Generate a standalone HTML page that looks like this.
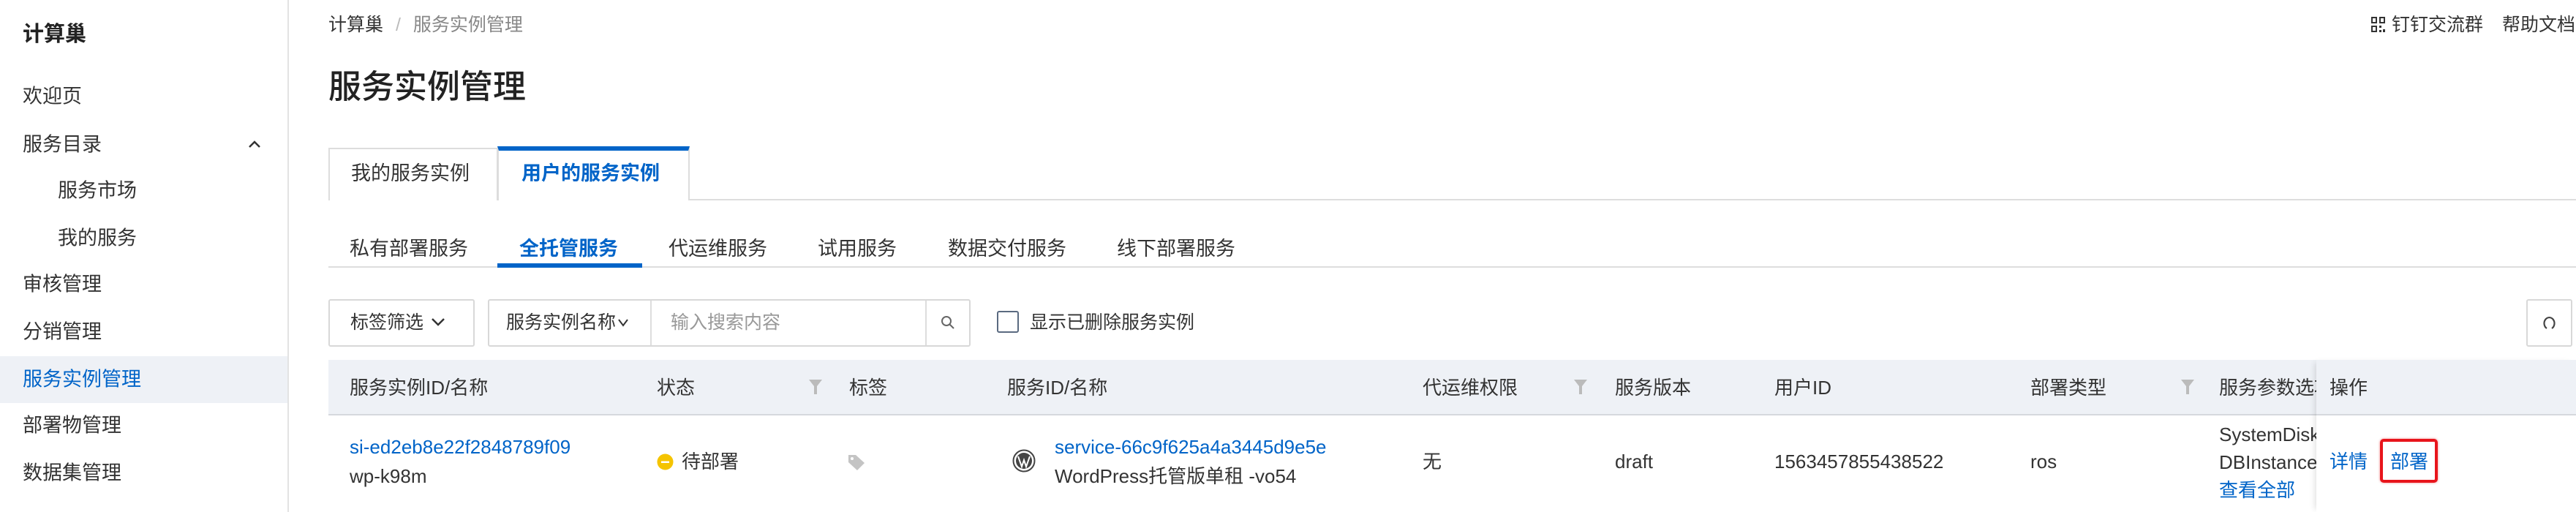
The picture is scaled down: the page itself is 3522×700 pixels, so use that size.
<!DOCTYPE html>
<html><head><meta charset="utf-8"><style>
*{margin:0;padding:0;box-sizing:border-box}
body{width:3522px;height:700px;overflow:hidden;background:#fff;font-family:"Liberation Sans","Noto Sans CJK SC",sans-serif;color:#333;position:relative}
.a{position:absolute;white-space:nowrap;line-height:1}
.side{position:absolute;left:0;top:0;width:395px;height:700px;border-right:2px solid #e3e3e3;background:#fff;overflow:hidden}
.m{font-size:27px;color:#333;left:31px;transform:translateY(-50%)}
.blue{color:#0064c8}
.t{font-size:26px;transform:translateY(-50%)}
.box{position:absolute;border:2px solid #d8d8d8;border-radius:3px;background:#fff}
</style></head><body>
<div class="side">
<div class="a" style="left:31px;top:33px;font-size:29px;font-weight:bold;color:#222">计算巢</div>
<div class="a m" style="top:132px">欢迎页</div>
<div class="a m" style="top:198px">服务目录</div>
<svg class="a" style="left:338px;top:190px" width="20" height="14" viewBox="0 0 20 14"><path d="M3 11 L10 4 L17 11" stroke="#333" stroke-width="2.5" fill="none"/></svg>
<div class="a m" style="top:261px;left:79px">服务市场</div>
<div class="a m" style="top:326px;left:79px">我的服务</div>
<div class="a m" style="top:389px">审核管理</div>
<div class="a m" style="top:454px">分销管理</div>
<div style="position:absolute;left:0;top:487px;width:393px;height:64px;background:#eef1f6"></div>
<div class="a m blue" style="top:519px">服务实例管理</div>
<div class="a m" style="top:582px">部署物管理</div>
<div class="a m" style="top:647px">数据集管理</div>
<div class="a m" style="top:716px">数据管理</div>
</div>

<div class="a" style="left:449px;top:22px;font-size:25px;color:#333">计算巢 <span style="color:#bbb;margin:0 10px">/</span> <span style="color:#888">服务实例管理</span></div>
<svg class="a" style="left:3241px;top:22px" width="22" height="24" viewBox="0 0 22 24"><g fill="#333"><rect x="1" y="1" width="8" height="9"/><rect x="12" y="1" width="8" height="9"/><rect x="1" y="13" width="8" height="9"/><rect x="12" y="13" width="3" height="3"/><rect x="17" y="18" width="3" height="4"/><rect x="12" y="19" width="3" height="3"/></g><g fill="#fff"><rect x="3" y="3" width="4" height="5"/><rect x="14" y="3" width="4" height="5"/><rect x="3" y="15" width="4" height="5"/></g></svg>
<div class="a" style="left:3270px;top:22px;font-size:25px;color:#333">钉钉交流群</div>
<div class="a" style="left:3421px;top:22px;font-size:25px;color:#333">帮助文档</div>

<div class="a" style="left:449px;top:96px;font-size:45px;font-weight:500;color:#222">服务实例管理</div>

<div style="position:absolute;left:449px;top:272px;width:3073px;height:2px;background:#ddd"></div>
<div style="position:absolute;left:449px;top:202px;width:232px;height:72px;border:2px solid #ddd;border-bottom:none;background:#fff"></div>
<div style="position:absolute;left:680px;top:200px;width:263px;height:74px;border:2px solid #ddd;border-top:6px solid #0064c8;border-bottom:none;background:#fff"></div>
<div class="a" style="left:480px;top:224px;font-size:27px;color:#333">我的服务实例</div>
<div class="a blue" style="left:713px;top:224px;font-size:27px;font-weight:bold">用户的服务实例</div>

<div style="position:absolute;left:449px;top:364px;width:3073px;height:2px;background:#ddd"></div>
<div style="position:absolute;left:680px;top:360px;width:198px;height:6px;background:#0064c8"></div>
<div class="a" style="left:478px;top:327px;font-size:27px">私有部署服务</div>
<div class="a blue" style="left:710px;top:327px;font-size:27px;font-weight:bold">全托管服务</div>
<div class="a" style="left:914px;top:327px;font-size:27px">代运维服务</div>
<div class="a" style="left:1118px;top:327px;font-size:27px">试用服务</div>
<div class="a" style="left:1296px;top:327px;font-size:27px">数据交付服务</div>
<div class="a" style="left:1527px;top:327px;font-size:27px">线下部署服务</div>

<div class="box" style="left:449px;top:409px;width:200px;height:65px"></div>
<div class="a" style="left:479px;top:429px;font-size:25px">标签筛选</div>
<svg class="a" style="left:588px;top:432px" width="22" height="16" viewBox="0 0 22 16"><path d="M3 4 L11 12 L19 4" stroke="#333" stroke-width="2.5" fill="none"/></svg>
<div class="box" style="left:667px;top:409px;width:660px;height:65px"></div>
<div style="position:absolute;left:889px;top:411px;width:2px;height:61px;background:#ddd"></div>
<div style="position:absolute;left:1265px;top:411px;width:2px;height:61px;background:#ddd"></div>
<div class="a" style="left:692px;top:429px;font-size:25px">服务实例名称</div>
<svg class="a" style="left:844px;top:434px" width="16" height="14" viewBox="0 0 16 14"><path d="M2 3 L8 11 L14 3" stroke="#333" stroke-width="2" fill="none"/></svg>
<div class="a" style="left:917px;top:429px;font-size:25px;color:#999">输入搜索内容</div>
<svg class="a" style="left:1285px;top:430px" width="22" height="22" viewBox="0 0 22 22"><circle cx="9" cy="9" r="6" stroke="#666" stroke-width="2" fill="none"/><path d="M13.5 13.5 L19 19" stroke="#666" stroke-width="2"/></svg>
<div style="position:absolute;left:1363px;top:425px;width:30px;height:30px;border:2px solid #5a6a80;border-radius:3px"></div>
<div class="a" style="left:1408px;top:429px;font-size:25px">显示已删除服务实例</div>
<div class="box" style="left:3454px;top:409px;width:63px;height:65px"></div>
<svg class="a" style="left:3474px;top:430px" width="22" height="24" viewBox="0 0 22 24"><path d="M8 19 A7 8 0 1 1 15 19" stroke="#444" stroke-width="2.2" fill="none"/></svg>

<div style="position:absolute;left:449px;top:492px;width:3073px;height:76px;background:#eef1f6;border-bottom:2px solid #d5d8dd"></div>
<div class="a t" style="left:478px;top:530px">服务实例ID/名称</div>
<div class="a t" style="left:898px;top:530px">状态</div>
<div class="a t" style="left:1161px;top:530px">标签</div>
<div class="a t" style="left:1377px;top:530px">服务ID/名称</div>
<div class="a t" style="left:1945px;top:530px">代运维权限</div>
<div class="a t" style="left:2208px;top:530px">服务版本</div>
<div class="a t" style="left:2426px;top:530px">用户ID</div>
<div class="a t" style="left:2776px;top:530px">部署类型</div>
<div class="a t" style="left:3034px;top:530px;width:133px;overflow:hidden;line-height:30px">服务参数选项</div>
<svg class="a" style="left:1105px;top:518px" width="20" height="22" viewBox="0 0 20 22"><path d="M1 1 H19 L12 10 V21 H8 V10 Z" fill="#bbb"/></svg>
<svg class="a" style="left:2151px;top:518px" width="20" height="22" viewBox="0 0 20 22"><path d="M1 1 H19 L12 10 V21 H8 V10 Z" fill="#bbb"/></svg>
<svg class="a" style="left:2981px;top:518px" width="20" height="22" viewBox="0 0 20 22"><path d="M1 1 H19 L12 10 V21 H8 V10 Z" fill="#bbb"/></svg>

<div class="a t" style="left:478px;top:611px;color:#0064c8">si-ed2eb8e22f2848789f09</div>
<div class="a t" style="left:478px;top:651px">wp-k98m</div>
<svg class="a" style="left:898px;top:620px" width="23" height="23" viewBox="0 0 23 23"><circle cx="11.5" cy="11.5" r="11" fill="#f5c400"/><rect x="6" y="10.5" width="11" height="2.5" fill="#fff"/></svg>
<div class="a t" style="left:932px;top:631px">待部署</div>
<svg class="a" style="left:1158px;top:620px" width="26" height="24" viewBox="0 0 26 24"><path d="M2 2 H12 L24 13 L14 23 L2 12 Z" fill="#c4c4c4"/><circle cx="7" cy="7" r="2" fill="#fff"/></svg>
<svg class="a" style="left:1384px;top:614px" width="32" height="32" viewBox="0 0 32 32"><circle cx="16" cy="16" r="14.5" fill="none" stroke="#444" stroke-width="2"/><circle cx="16" cy="16" r="11" fill="#444"/><path d="M8 10 L13 24 L16 15 L19 24 L24 10" stroke="#fff" stroke-width="2" fill="none"/></svg>
<div class="a t" style="left:1442px;top:611px;color:#0064c8">service-66c9f625a4a3445d9e5e</div>
<div class="a t" style="left:1442px;top:651px">WordPress托管版单租 -vo54</div>
<div class="a t" style="left:1945px;top:631px">无</div>
<div class="a t" style="left:2208px;top:631px">draft</div>
<div class="a t" style="left:2426px;top:631px">1563457855438522</div>
<div class="a t" style="left:2776px;top:631px">ros</div>
<div class="a" style="left:3034px;top:575px;width:133px;overflow:hidden;font-size:26px;line-height:38px;white-space:nowrap">SystemDiskCategory<br>DBInstanceClass<br><span class="blue">查看全部</span></div>
<div style="position:absolute;left:3167px;top:492px;width:355px;height:208px;background:transparent;box-shadow:-6px 0 8px -4px rgba(0,0,0,0.12)"></div>
<div class="a t" style="left:3185px;top:530px">操作</div>
<div class="a t blue" style="left:3185px;top:631px">详情</div>
<div style="position:absolute;left:3254px;top:600px;width:79px;height:60px;border:4px solid #e8141b;border-radius:5px;box-shadow:0 0 3px rgba(232,20,27,0.5)"></div>
<div class="a t blue" style="left:3268px;top:631px">部署</div>
</body></html>
